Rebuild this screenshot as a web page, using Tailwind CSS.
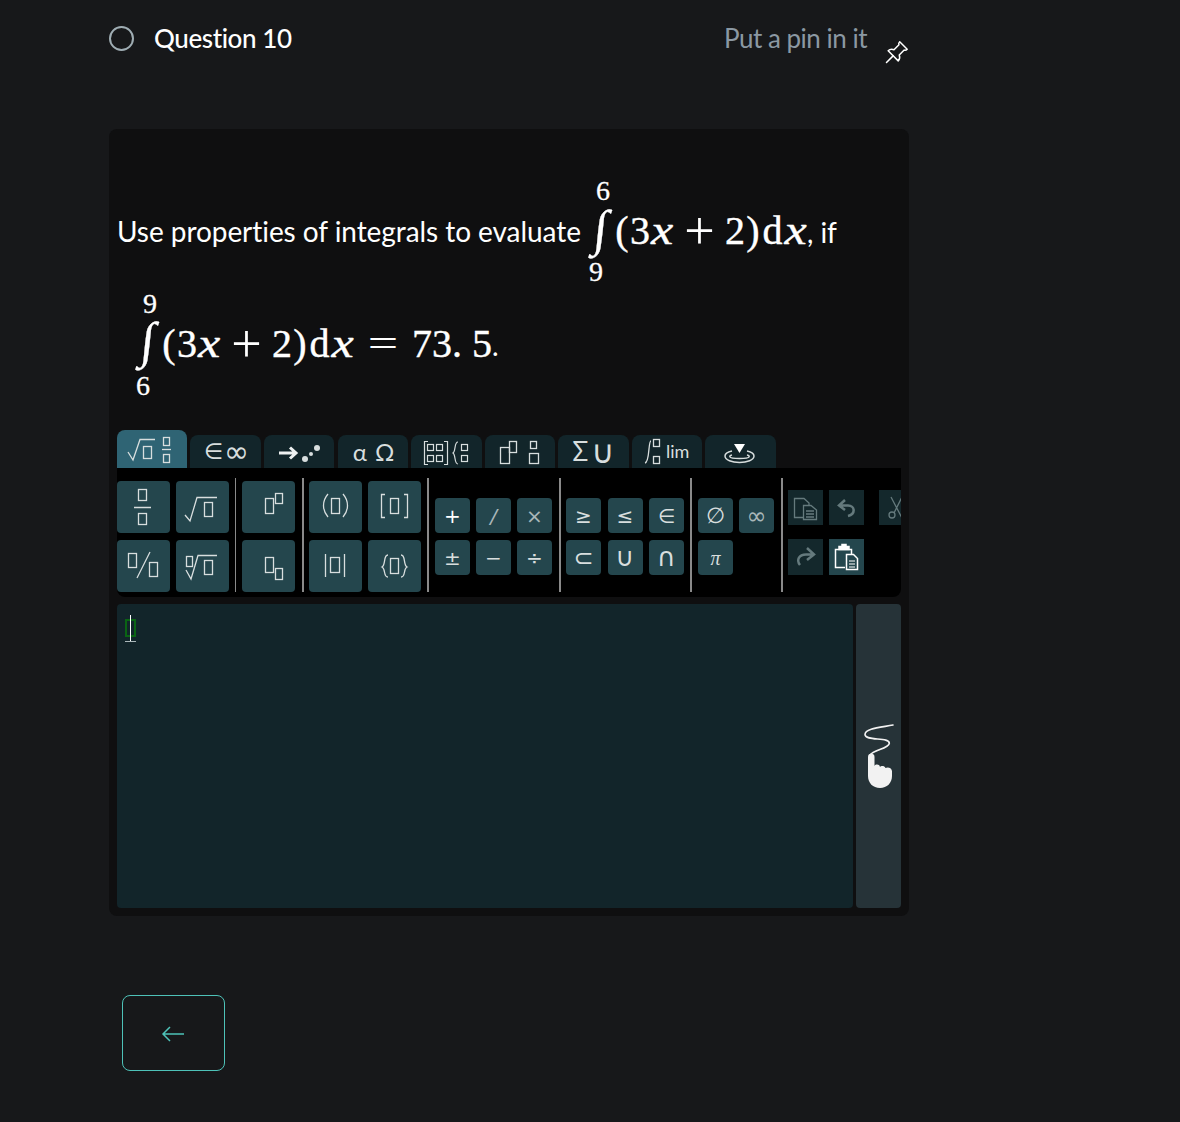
<!DOCTYPE html>
<html lang="en">
<head>
<meta charset="utf-8">
<title>Question 10</title>
<script src="https://cdn.jsdelivr.net/npm/@tailwindcss/browser@4"></script>
</head>
<body class="bg-[#17181a] font-['Lato',sans-serif] w-[1180px] h-[1122px] overflow-hidden">
<main class="w-[800px] ml-[109px]">
  <header class="flex items-start justify-between h-[129px]">
    <div class="flex items-center gap-[20px] h-[76px]">
      <span class="w-[25px] h-[25px] rounded-full border-2 border-[#9fadb3]"></span>
      <span class="text-[26px] tracking-[-0.4px] font-medium text-white">Question 10</span>
    </div>
    <div class="flex items-start h-[76px]">
      <span class="text-[26px] tracking-[-0.5px] text-[#8b98a3] leading-[76px]">Put a pin in it</span>
      <svg class="ml-[18px] mt-[40px]" width="24" height="24" viewBox="0 0 16 16" fill="none" stroke="#fff" stroke-width="1" stroke-linejoin="round" stroke-linecap="round"><path d="M9.800 1.200 14.800 6.200C14 7 13.200 6.900 12.800 6.700L9.500 10C10 11.300 9.800 12.900 8.800 13.900L2.100 7.200C3.100 6.200 4.700 6 6 6.500L9.300 3.200C9.100 2.800 9 2 9.800 1.200Z"/><path d="M5.400 10.600 1 15"/></svg>
    </div>
  </header>

  <section class="h-[787px] rounded-lg bg-[#0f0f10] px-[8px] pt-[46px]">
    <div class="flex items-center h-[113px] text-white">
      <span class="text-[28px] tracking-[-0.06px] shrink-0 -mt-[2px]">Use properties of integrals to evaluate</span>
      <span class="flex flex-col w-[24px] ml-[8px] mt-[2px] font-['Liberation_Serif',serif] text-[28px] leading-[24px] h-[110px] shrink-0 [-webkit-text-stroke:0.3px_#fff]">
        <span class="ml-[7px] mt-[1px] h-[27px]">6</span>
        <span class="text-[50px] leading-[54px] h-[54px] inline-block skew-x-[-6deg] ml-[5px] -translate-y-[5px]">∫</span>
        <span class="h-[28px]">9</span>
      </span>
      <span class="ml-[1px] font-['Liberation_Serif',serif] text-[40px] whitespace-nowrap -mt-[2px] [-webkit-text-stroke:0.4px_#fff]"><span class="inline-block w-[16px] text-center">(</span><span class="inline-block w-[20px] text-center">3</span><i class="inline-block w-[24px] text-center scale-x-125">x</i><span class="inline-block w-[51px] text-center scale-[1.35] [-webkit-text-stroke:0]">+</span><span class="inline-block w-[20px] text-center">2</span><span class="inline-block w-[16px] text-center">)</span><span class="inline-block w-[23px] text-center">d</span><i class="inline-block w-[23px] text-center scale-x-125">x</i></span><span class="text-[28px]">, if</span>
    </div>
    <div class="flex items-center h-[113px] text-white">
      <span class="flex flex-col w-[24px] ml-[19px] mt-[4px] font-['Liberation_Serif',serif] text-[28px] leading-[24px] h-[110px] shrink-0 [-webkit-text-stroke:0.3px_#fff]">
        <span class="ml-[7px] h-[28px]">9</span>
        <span class="text-[50px] leading-[54px] h-[54px] inline-block skew-x-[-6deg] ml-[5px] -translate-y-[7px]">∫</span>
        <span class="h-[28px]">6</span>
      </span>
      <span class="ml-[1px] font-['Liberation_Serif',serif] text-[40px] whitespace-nowrap -mt-[2px] [-webkit-text-stroke:0.4px_#fff]"><span class="inline-block w-[16px] text-center">(</span><span class="inline-block w-[20px] text-center">3</span><i class="inline-block w-[24px] text-center scale-x-125">x</i><span class="inline-block w-[51px] text-center scale-[1.35] [-webkit-text-stroke:0]">+</span><span class="inline-block w-[20px] text-center">2</span><span class="inline-block w-[16px] text-center">)</span><span class="inline-block w-[23px] text-center">d</span><i class="inline-block w-[23px] text-center scale-x-125">x</i><span class="inline-block w-[58px] text-center scale-x-[1.35] [-webkit-text-stroke:0]">=</span><span class="inline-block w-[20px] text-center">7</span><span class="inline-block w-[20px] text-center">3</span><span class="inline-block w-[20px]">.</span><span class="inline-block w-[20px] text-center">5</span></span><span class="text-[28px]">.</span>
    </div>

    <div class="mt-[29px] flex items-end gap-[3px] h-[38px] text-[#d8dede] font-['DejaVu_Sans',sans-serif]">
      <div class="w-[70px] h-[38px] rounded-t-lg bg-[#2f6474] flex items-center justify-center">
        <svg width="70" height="38" fill="none" stroke="#d8dede" stroke-width="1.300"><path d="M11 22 16 30 23 9.500H38"/><rect x="26.500" y="16.500" width="8" height="12"/><rect x="46.500" y="7.500" width="6" height="8"/><path d="M45 19.500H54"/><rect x="46.500" y="24.500" width="6" height="8"/></svg>
      </div>
      <div class="w-[71px] h-[33px] rounded-t-lg bg-[#12252a] flex items-center justify-center gap-[1px] text-[22px] pl-[2px]"><span>∈</span><span class="text-[30px] leading-[30px]">∞</span></div>
      <div class="w-[70px] h-[33px] rounded-t-lg bg-[#12252a]">
        <svg width="70" height="33" fill="none"><path d="M15 18H31M26 12.500 32 18 26 23.500" stroke="#eef1f1" stroke-width="3"/><circle cx="41" cy="24" r="3" fill="#d8dede"/><circle cx="47" cy="19" r="2" fill="#d8dede"/><circle cx="53" cy="13" r="3" fill="#d8dede"/></svg>
      </div>
      <div class="ml-px w-[70px] h-[33px] rounded-t-lg bg-[#12252a] flex items-center justify-center gap-[8px] text-[24px] pl-[1px]"><span class="font-['Lato',sans-serif]">α</span><span class="font-['Lato',sans-serif]">Ω</span></div>
      <div class="w-[71px] h-[33px] rounded-t-lg bg-[#12252a]">
        <svg width="71" height="33" fill="none" stroke="#d8dede" stroke-width="1.200"><path d="M17 6.500H13.500V29.500H17M33 6.500H36.500V29.500H33"/><rect x="16.500" y="9.500" width="6" height="6"/><rect x="25.500" y="9.500" width="6" height="6"/><rect x="16.500" y="20.500" width="6" height="6"/><rect x="25.500" y="20.500" width="6" height="6"/><path d="M47 7C43 7 45 16 42 18C45 20 43 29 47 29"/><rect x="50.500" y="9.500" width="6" height="6"/><rect x="50.500" y="20.500" width="6" height="6"/></svg>
      </div>
      <div class="w-[70px] h-[33px] rounded-t-lg bg-[#12252a]">
        <svg width="70" height="33" fill="none" stroke="#d8dede" stroke-width="1.300"><rect x="15.500" y="12.500" width="9" height="16"/><rect x="24.500" y="6.500" width="7" height="11"/><rect x="45.500" y="6.500" width="6" height="7"/><rect x="44.500" y="18.500" width="9" height="10"/></svg>
      </div>
      <div class="w-[71px] h-[33px] rounded-t-lg bg-[#12252a] flex items-center justify-center gap-[3px] text-[26px]"><span class="font-['Lato',sans-serif]">Σ</span><span class="text-[32px] leading-[32px]">∪</span></div>
      <div class="w-[70px] h-[33px] rounded-t-lg bg-[#12252a] flex items-center pl-[12px]">
        <svg width="24" height="33" fill="none" stroke="#d8dede" stroke-width="1.300"><path d="M7 6C4 6 6 27 1 28"/><rect x="9.500" y="4.500" width="6" height="7"/><rect x="9.500" y="21.500" width="6" height="7"/></svg>
        <span class="font-['Lato',sans-serif] text-[18px] -ml-[2px]">lim</span>
      </div>
      <div class="w-[71px] h-[33px] rounded-t-lg bg-[#12252a]">
        <svg width="71" height="33" fill="none" stroke="#d8dede" stroke-width="1.500"><path d="M29 9H40L34.500 18Z" fill="#fff" stroke="none"/><path d="M27 16C22 17 20 19 20 21C20 25 27 27.500 34.500 27.500C42 27.500 49 25 49 21C49 19 47 17 42 16"/><path d="M27 20C25 20.500 24.500 21 25 22C26 24 43 24 44 22C44.500 21 44 20.500 42 20"/></svg>
      </div>
    </div>

    <div class="h-[129px] w-[784px] overflow-hidden rounded-b-lg bg-black flex items-start pt-[10px] text-[#d8dede] font-['DejaVu_Sans',sans-serif] text-[20px]">
      <div class="shrink-0 grid grid-cols-[53px_53px] gap-x-[6px] gap-y-[7px] mt-[3px]">
        <div class="h-[52px] rounded bg-[#24464d]"><svg width="53" height="52" fill="none" stroke="#d8dede" stroke-width="1.300"><rect x="21.500" y="8.500" width="8" height="11"/><path d="M17 26.500H34"/><rect x="21.500" y="32.500" width="8" height="11"/></svg></div>
        <div class="h-[52px] rounded bg-[#24464d]"><svg width="53" height="52" fill="none" stroke="#d8dede" stroke-width="1.300"><path d="M9 34 14 40 21 16.500H41"/><rect x="28.500" y="21.500" width="8" height="14"/></svg></div>
        <div class="h-[52px] rounded bg-[#24464d]"><svg width="53" height="52" fill="none" stroke="#d8dede" stroke-width="1.300"><rect x="11.500" y="13.500" width="8" height="14"/><path d="M20 38 33 12"/><rect x="32.500" y="22.500" width="8" height="14"/></svg></div>
        <div class="h-[52px] rounded bg-[#24464d]"><svg width="53" height="52" fill="none" stroke="#d8dede" stroke-width="1.300"><rect x="10.500" y="16.500" width="6" height="10"/><path d="M10 30 15 39 22 15.500H41"/><rect x="28.500" y="20.500" width="8" height="14"/></svg></div>
      </div>
      <div class="shrink-0 w-px h-[114px] bg-[#8a8a8a] ml-[6px]"></div>
      <div class="shrink-0 grid grid-cols-[53px] gap-y-[7px] mt-[3px] ml-[6px]">
        <div class="h-[52px] rounded bg-[#24464d]"><svg width="53" height="52" fill="none" stroke="#d8dede" stroke-width="1.300"><rect x="23.500" y="17.500" width="8" height="15"/><rect x="33.500" y="12.500" width="7" height="10"/></svg></div>
        <div class="h-[52px] rounded bg-[#24464d]"><svg width="53" height="52" fill="none" stroke="#d8dede" stroke-width="1.300"><rect x="23.500" y="17.500" width="8" height="15"/><rect x="33.500" y="28.500" width="7" height="11"/></svg></div>
      </div>
      <div class="shrink-0 w-[2px] h-[114px] bg-[#8a8a8a] ml-[7px]"></div>
      <div class="shrink-0 grid grid-cols-[53px_53px] gap-x-[6px] gap-y-[7px] mt-[3px] ml-[5px]">
        <div class="h-[52px] rounded bg-[#24464d]"><svg width="53" height="52" fill="none" stroke="#d8dede" stroke-width="1.300"><path d="M19 13C13 20 13 29 19 36M34 13C40 20 40 29 34 36"/><rect x="22.500" y="17.500" width="8" height="15"/></svg></div>
        <div class="h-[52px] rounded bg-[#24464d]"><svg width="53" height="52" fill="none" stroke="#d8dede" stroke-width="1.300"><path d="M17 13.500H13.500V36.500H17M36 13.500H39.500V36.500H36"/><rect x="22.500" y="17.500" width="8" height="15"/></svg></div>
        <div class="h-[52px] rounded bg-[#24464d]"><svg width="53" height="52" fill="none" stroke="#d8dede" stroke-width="1.300"><path d="M16.500 14V37M35.500 14V37"/><rect x="21.500" y="17.500" width="9" height="15"/></svg></div>
        <div class="h-[52px] rounded bg-[#24464d]"><svg width="53" height="52" fill="none" stroke="#d8dede" stroke-width="1.300"><path d="M20 15C15 15 18 25 14 27C18 29 15 37 20 37M33 15C38 15 35 25 39 27C35 29 38 37 33 37"/><rect x="22.500" y="18.500" width="8" height="15"/></svg></div>
      </div>
      <div class="shrink-0 w-[2px] h-[114px] bg-[#8a8a8a] ml-[6px]"></div>
      <div class="shrink-0 grid grid-cols-[35px_35px_35px] gap-x-[6px] gap-y-[7px] mt-[20px] ml-[6px]">
        <div class="h-[35px] rounded-sm bg-[#24464d] flex items-center justify-center text-white">+</div>
        <div class="h-[35px] rounded-sm bg-[#24464d] flex items-center justify-center italic text-[#a9b7b9]">/</div>
        <div class="h-[35px] rounded-sm bg-[#24464d] flex items-center justify-center text-[#a9b7b9]">×</div>
        <div class="h-[35px] rounded-sm bg-[#24464d] flex items-center justify-center">±</div>
        <div class="h-[35px] rounded-sm bg-[#24464d] flex items-center justify-center">−</div>
        <div class="h-[35px] rounded-sm bg-[#24464d] flex items-center justify-center">÷</div>
      </div>
      <div class="shrink-0 w-[2px] h-[114px] bg-[#8a8a8a] ml-[7px]"></div>
      <div class="shrink-0 grid grid-cols-[35px_35px_35px] gap-x-[6.500px] gap-y-[7px] mt-[20px] ml-[5px]">
        <div class="h-[35px] rounded-sm bg-[#24464d] flex items-center justify-center">≥</div>
        <div class="h-[35px] rounded-sm bg-[#24464d] flex items-center justify-center">≤</div>
        <div class="h-[35px] rounded-sm bg-[#24464d] flex items-center justify-center">∈</div>
        <div class="h-[35px] rounded-sm bg-[#24464d] flex items-center justify-center text-[24px]">⊂</div>
        <div class="h-[35px] rounded-sm bg-[#24464d] flex items-center justify-center text-[26px]">∪</div>
        <div class="h-[35px] rounded-sm bg-[#24464d] flex items-center justify-center text-[26px]">∩</div>
      </div>
      <div class="shrink-0 w-[2px] h-[114px] bg-[#8a8a8a] ml-[6px]"></div>
      <div class="shrink-0 grid grid-cols-[35px_35px] gap-x-[6px] gap-y-[7px] mt-[20px] ml-[6px]">
        <div class="h-[35px] rounded-sm bg-[#24464d] flex items-center justify-center text-[22px]">∅</div>
        <div class="h-[35px] rounded-sm bg-[#24464d] flex items-center justify-center text-[#a9b7b9] text-[24px]">∞</div>
        <div class="h-[35px] rounded-sm bg-[#24464d] flex items-center justify-center italic font-['Liberation_Serif',serif]">π</div>
      </div>
      <div class="shrink-0 w-[2px] h-[114px] bg-[#8a8a8a] ml-[7px]"></div>
      <div class="shrink-0 grid grid-cols-[35px_35px_35px] gap-x-[6px] gap-y-[14px] mt-[12px] ml-[5px]">
        <div class="h-[35px] bg-[#14282c]"><svg width="35" height="35" fill="none" stroke="#657a7d" stroke-width="1.300"><path d="M15 27.500H6.500V8.500H16L21 13V15"/><path d="M15.500 15.500H23L28.500 20V29.500H15.500Z"/><path d="M18 21H26M18 24H26M18 27H26"/></svg></div>
        <div class="h-[35px] bg-[#14282c]"><svg width="35" height="35" fill="none" stroke="#657a7d" stroke-width="2.500"><path d="M16 10 10 15.500 16 20M10 15.500H19C26 15.500 27 24 19 26"/></svg></div>
        <div class="h-[35px] bg-[#14282c] relative left-[9px]"><svg width="35" height="35" fill="none" stroke="#657a7d" stroke-width="1.300"><path d="M12 7 24 30M23 7 15 23"/><circle cx="13" cy="25" r="3"/></svg></div>
        <div class="h-[36px] bg-[#14282c]"><svg width="35" height="36" fill="none" stroke="#657a7d" stroke-width="2.500"><path d="M19 9 26 15.500 19 21M26 15.500H18C11 15.500 8 21 12 26"/></svg></div>
        <div class="h-[36px] bg-[#24464d]"><svg width="35" height="36" fill="none" stroke="#fff" stroke-width="1.500"><path d="M16 28.500H6.500V10.500H22.500V15"/><path d="M10 10.500V7.500H13V5.500H17V7.500H20V10.500Z" fill="#fff"/><path d="M17.500 15.500H24.500L28.500 19.500V30.500H17.500Z" fill="#24464d"/><path d="M20 22H26M20 25H26M20 28H26" stroke-width="1.200"/></svg></div>
      </div>
    </div>

    <div class="mt-[7px] flex gap-[3px] h-[304px] w-[784px]">
      <div class="w-[736px] rounded bg-[#12252a] relative">
        <span class="absolute left-[8px] top-[15px] w-[11px] h-[18px] border-2 border-[#0a6414]"></span>
        <span class="absolute left-[13px] top-[11px] w-px h-[27px] bg-white"></span>
        <span class="absolute left-[8px] top-[37px] w-[11px] h-px bg-[#a9b7b9]"></span>
      </div>
      <div class="w-[45px] rounded bg-[#263338] flex items-center justify-center">
        <svg width="30" height="66" fill="none"><path d="M29 2C16 4.500 1 5.500 1 11.500C1 18.500 26 13.500 25.300 20.500C24.300 25.500 9.500 27 6 32" stroke="#f2f2f2" stroke-width="1.600" stroke-linecap="round"/><path d="M4 34A3.200 3.200 0 0 1 10.500 34V43C11.500 41 15.500 41 16 44C17 42.500 20.500 42.500 21.500 45C23 44 27.500 44 28 48V53C28 60 23 65 16 65C9 65 4 60 4 53Z" fill="#f2f2f2"/></svg>
      </div>
    </div>
  </section>

  <button class="mt-[79px] ml-[13px] w-[103px] h-[76px] rounded-lg border border-[#4ec2b8] flex items-center justify-center">
    <svg class="-ml-[2px] mt-[1px]" width="24" height="20" fill="none" stroke="#4ec2b8" stroke-width="1.500"><path d="M23 10H2M9 3 2 10 9 17"/></svg>
  </button>
</main>
</body>
</html>
